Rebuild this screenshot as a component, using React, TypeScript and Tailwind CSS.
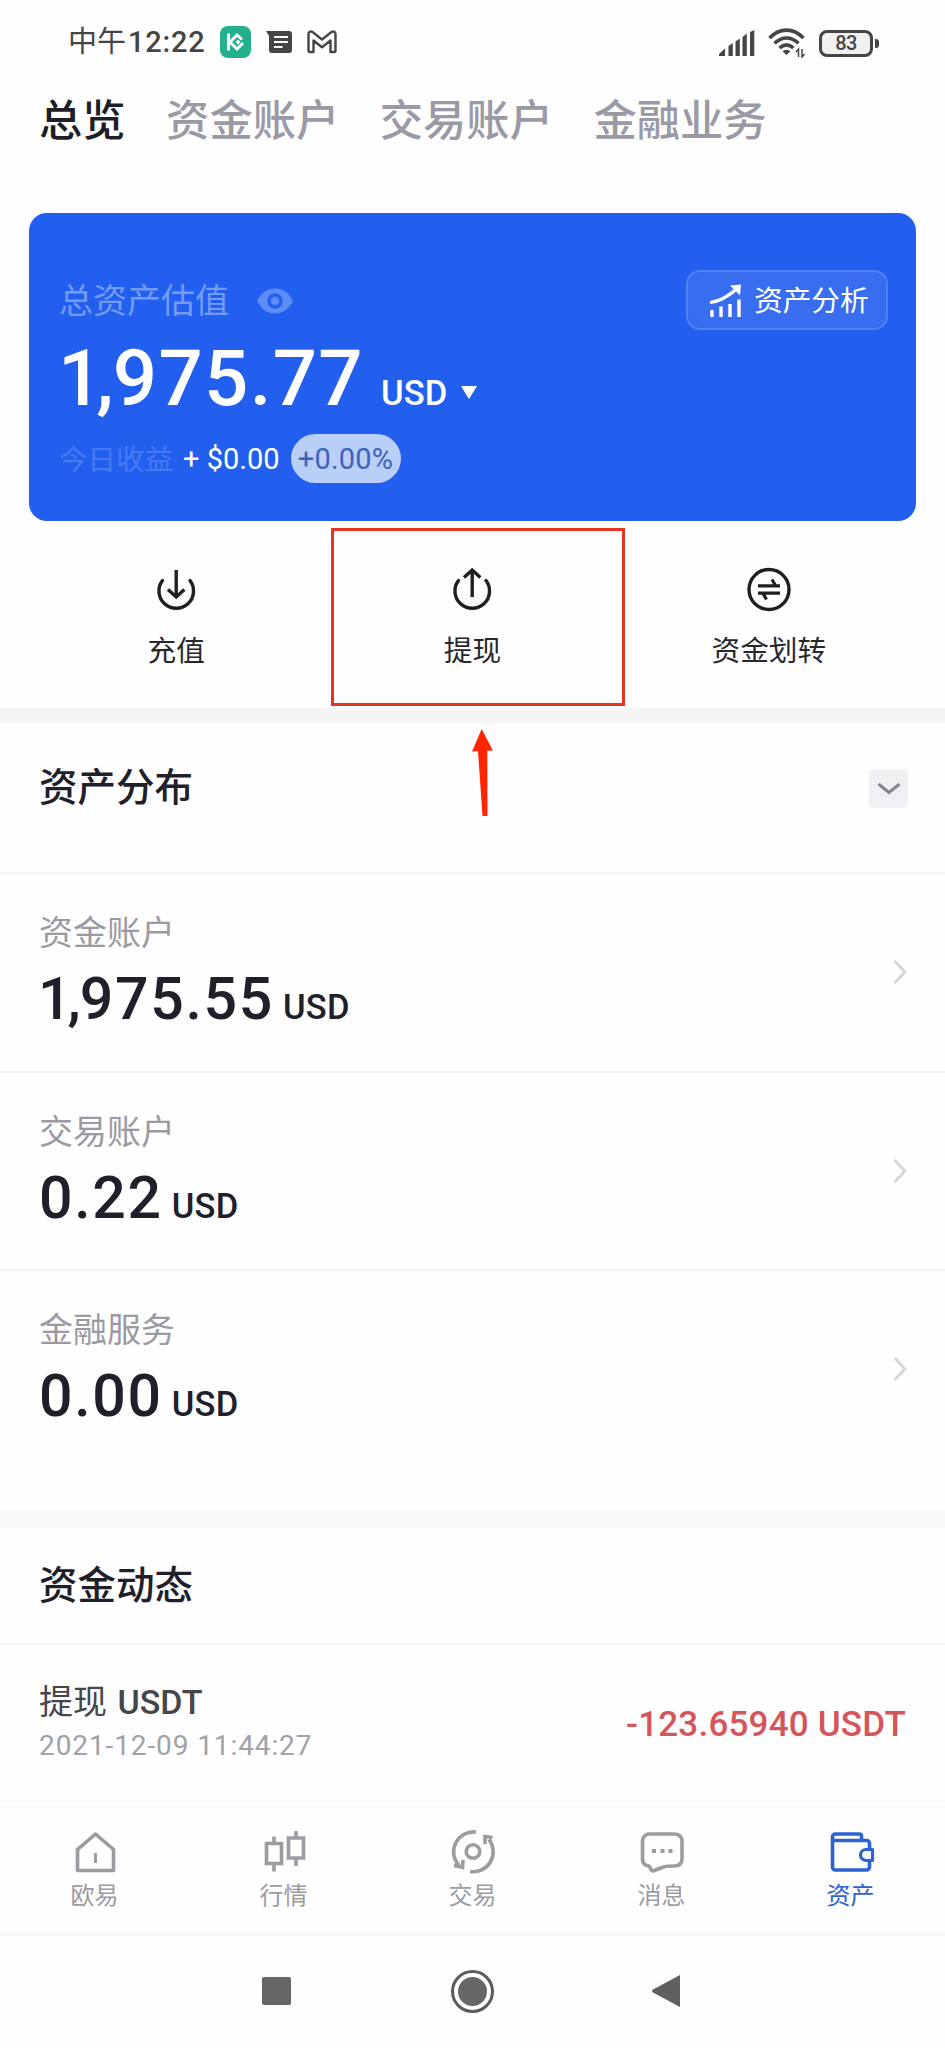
import React from "react";

const FONT = "font-['Roboto','Noto_Sans_CJK_SC',sans-serif]";

function StatusBar() {
  return (
    <header className="flex h-[86px] items-center pl-[68px] pr-[66px] pb-[2px] text-[#454545]">
      <span className="flex items-baseline leading-[40px]">
        <span className="text-[29px]">中午</span>
        <span className="ml-[2px] text-[29px] font-medium tracking-[0.8px]">12:22</span>
      </span>
      <svg className="ml-[14px] shrink-0" width="31" height="32" viewBox="0 0 31 32" fill="none">
        <rect width="31" height="32" rx="8" fill="#23b08c" />
        <path d="M8.500 7.500v17M10 16l7-7 5 4.500M10 16l7 7 6-6" stroke="#fff" strokeWidth="3" />
        <path d="m18 13.600 2.400 2.400-2.400 2.400-2.400-2.400z" fill="#fff" />
      </svg>
      <svg className="ml-[15px] shrink-0" width="26" height="22" viewBox="0 0 26 22" fill="none">
        <path d="M0 0h23a3 3 0 0 1 3 3v16a3 3 0 0 1-3 3H6a3 3 0 0 1-3-3V5z" fill="#454545" />
        <path d="M8 6h14M8 11h14M8 16h8.500" stroke="#fff" strokeWidth="2" />
      </svg>
      <svg className="ml-[15px] shrink-0" width="30" height="24" viewBox="0 0 30 24" fill="none">
        <path
          d="M1.500 20.500V4c0-2.500 2.500-3.200 4.200-1.900L15 9.500l9.300-7.400C26 .8 28.500 1.500 28.500 4v16.500c0 1-.6 1.500-1.500 1.500h-3.500V10.500L15 17.300 6.500 10.500V22H3c-.9 0-1.500-.5-1.500-1.500z"
          stroke="#454545" strokeWidth="2.400" strokeLinejoin="round"
        />
      </svg>
      <div className="ml-auto mt-[2px] flex items-center">
        <svg width="36" height="26" viewBox="0 0 36 26" fill="#454545">
          <path d="M0 26v-2l6-5.500V26zM9.500 26V16l4.300-3v13zM16.500 26V11.500l4.300-3V26zM23.500 26V7l4.300-3.500V26zM31 26V2l4.300-2v26z" />
        </svg>
        <svg className="ml-[13px]" width="38" height="30" viewBox="0 0 38 30" fill="none" stroke="#454545">
          <path d="M1.500 10C12 -.5 25 -.5 35.500 10" strokeWidth="3.600" />
          <path d="M6.500 15.200c7.500-7 16.500-7 24 0" strokeWidth="3.600" />
          <path d="M11.500 20c4.500-4 9.500-4 14 0" strokeWidth="3.600" />
          <path d="m18.500 27-4-3.800c2.500-2 5.500-2 8 0z" fill="#454545" stroke="none" />
          <path d="M30.500 29v-8l-2.500 3M34 21v8l2.500-3" strokeWidth="1.500" />
        </svg>
        <div className="ml-[13px] flex h-[27px] w-[54px] items-center justify-center rounded-[8px] border-[3px] border-[#454545] bg-[#f1f1f1] text-[20px] font-medium leading-none tracking-[-0.5px]">
          83
        </div>
        <span className="ml-[2px] h-[9px] w-[4px] rounded-r-[3px] bg-[#454545]" />
      </div>
    </header>
  );
}

function Tabs() {
  return (
    <nav className="flex h-[127px] gap-[40.500px] pl-[39px] pt-[8px] text-[43.300px] font-medium leading-[56px] text-[#9a9aa6]">
      <span className="text-[#1e1e28]">总览</span>
      <span>资金账户</span>
      <span>交易账户</span>
      <span>金融业务</span>
    </nav>
  );
}

function BalanceCard() {
  return (
    <section className="mx-[29px] flex h-[308px] flex-col rounded-[18px] bg-[#225fee] pl-[30px] pr-[28px] pt-[57px]">
      <div className="flex h-[60px] items-center">
        <span className="mt-[2px] text-[34px] leading-[60px] text-[#759cf5]">总资产估值</span>
        <svg className="ml-[28px] mt-[2px]" width="36" height="26" viewBox="0 0 36 26" fill="none">
          <path d="M0 13C4.500 4.500 10.500.5 18 .5S31.500 4.500 36 13c-4.500 8.500-10.500 12.500-18 12.500S4.500 21.500 0 13z" fill="#5c8cf6" />
          <circle cx="18" cy="13" r="6" stroke="#225fee" strokeWidth="3.400" />
        </svg>
        <div className="ml-auto flex h-[60px] w-[202px] items-center rounded-[14px] border-2 border-[#4f81f5] bg-[#386df0] pl-[21px] text-white">
          <svg width="33" height="33" viewBox="0 0 33 33" fill="none" stroke="#fff">
            <path d="M1 18.500C12 17 20 12 28 4.500" strokeWidth="3.200" />
            <path d="m21 1.500 11-1-1 11z" fill="#fff" stroke="none" />
            <path d="M3 33v-7M12 33V22.500M21 33V20M30 33V15.500" strokeWidth="3.400" />
          </svg>
          <span className="ml-[12px] mt-[2px] whitespace-nowrap text-[28.700px] leading-[56px]">资产分析</span>
        </div>
      </div>
      <div className="mt-[5px] flex h-[87px] items-baseline text-white">
        <span className="ml-[-1px] text-[78px] font-medium leading-[87px]">
          <span className="tracking-[-6px]">1</span>
          <span className="tracking-[-1px]">,</span>
          <span className="tracking-[1.300px]">975.77</span>
        </span>
        <span className="ml-[17px] text-[34.500px] font-medium tracking-[0.200px]">USD</span>
        <svg className="ml-[13px] mt-[51px] self-start" width="16" height="13" viewBox="0 0 16 13" fill="#fff">
          <path d="M0 0h16L8 13z" />
        </svg>
      </div>
      <div className="mt-[12px] flex h-[49px] items-center leading-[49px]">
        <span className="mt-[3px] text-[28.500px] text-[#4679f1]">今日收益</span>
        <span className="ml-[10px] mt-[2px] text-[29px] text-white">+ $0.00</span>
        <span className="ml-[11px] h-[49px] w-[110px] rounded-full bg-[#bacff8] text-center text-[29px] leading-[51px] tracking-[0.200px] text-[#3d62bd]">
          +0.00%
        </span>
      </div>
    </section>
  );
}

function Action({ label, children }: { label: string; children: React.ReactNode }) {
  return (
    <div className="flex flex-col items-center pt-[46px]">
      <svg width="46" height="46" viewBox="0 0 46 46" fill="none" stroke="#1f1f1f" strokeWidth="3.400">
        {children}
      </svg>
      <span className="mt-[18px] text-[28.700px] leading-[40px] text-[#28282c]">{label}</span>
    </div>
  );
}

function Actions() {
  return (
    <section className="relative mx-[28px] grid h-[187px] grid-cols-3">
      <Action label="充值">
        <path d="M9.500 13.500A17.300 17.300 0 1 0 37 13.500" strokeLinecap="round" />
        <path d="M23.200 3v26M15 22.500l8.200 7.500 8.200-7.500" />
      </Action>
      <Action label="提现">
        <path d="M9.500 13.500A17.300 17.300 0 1 0 37 13.500" strokeLinecap="round" />
        <path d="M23.200 30V3M15 10.500 23.200 3l8.200 7.500" />
      </Action>
      <Action label="资金划转">
        <circle cx="23" cy="22.500" r="20" />
        <path d="M12 18.800h22M26 12.500l3.500 6M34 26.200H12M20.500 32.500 17 26.500" strokeWidth="3.200" />
      </Action>
      <div className="absolute left-[303px] top-[7px] h-[178px] w-[294px] border-[3px] border-[#e83323]" />
      <svg className="absolute left-[443px] top-[207px]" width="24" height="90" viewBox="0 0 24 90" fill="#ff2600">
        <path d="M10.700 1 21.800 22.500l-5.500.3L16.500 88h-5L7 23.200l-6 .3z" />
      </svg>
    </section>
  );
}

function Account({ label, lead, value }: { label: string; lead?: boolean; value: string }) {
  return (
    <div className="flex h-[198.500px] items-center border-b-[2px] border-[#f4f4f4] pl-[39px] pr-[37px]">
      <div className="flex h-full flex-col pt-[35px]">
        <span className="text-[34px] leading-[48px] text-[#9a9aa2]">{label}</span>
        <span className="mt-[6px] flex items-baseline text-[#20202a]">
          <span className="text-[59px] font-medium leading-[72px]">
            {lead && (
              <>
                <span className="ml-[-1px] tracking-[-4px]">1</span>
                <span className="tracking-[-1px]">,</span>
              </>
            )}
            <span className="tracking-[1.700px]">{value}</span>
          </span>
          <span className="ml-[9px] text-[34.500px] font-medium tracking-[0.200px]">USD</span>
        </span>
      </div>
      <svg className="ml-auto" width="16" height="26" viewBox="0 0 16 26" fill="none" stroke="#d6d6da" strokeWidth="2.800">
        <path d="m2.500 2 10.500 11L2.500 24" />
      </svg>
    </div>
  );
}

function Distribution() {
  return (
    <section className="border-t-[15px] border-[#f5f5f6]">
      <div className="flex h-[151px] items-start justify-between border-b-[2px] border-[#f2f2f2] pl-[39px] pr-[37px]">
        <h2 className="mt-[39px] text-[38.500px] font-medium leading-[52px] text-[#20202a]">资产分布</h2>
        <div className="mt-[46px] flex h-[39px] w-[39px] items-center justify-center rounded-[5px] bg-[#f0f0f4]">
          <svg width="24" height="13" viewBox="0 0 24 13" fill="none" stroke="#85858f" strokeWidth="3">
            <path d="m1.500 2 10.500 8.500L22.500 2" />
          </svg>
        </div>
      </div>
      <Account label="资金账户" lead value="975.55" />
      <Account label="交易账户" value="0.22" />
      <div className="h-[238px] overflow-hidden">
        <Account label="金融服务" value="0.00" />
        <div className="relative mt-[-2px] h-[42px] bg-[#fefefe]" />
      </div>
    </section>
  );
}

function Activity() {
  return (
    <section className="border-t-[19px] border-[#fafafa]">
      <div className="flex h-[117px] items-center border-b-[2px] border-[#f4f4f4] pl-[39px]">
        <h2 className="text-[38.500px] font-medium leading-[52px] text-[#20202a]">资金动态</h2>
      </div>
      <div className="flex h-[157px] items-center justify-between border-b-2 border-[#f8f8f8] pl-[39px] pr-[39px]">
        <div className="mt-[2px] flex flex-col">
          <span className="text-[34px] leading-[44px] text-[#45454a]">
            提现 <span className="ml-[2px] font-medium">USDT</span>
          </span>
          <span className="text-[28px] leading-[44px] tracking-[0.900px] text-[#a1a1a6]">2021-12-09 11:44:27</span>
        </div>
        <span className="mt-[4px] text-[35px] font-medium leading-[44px] tracking-[0.200px] text-[#d4555b]">-123.65940 USDT</span>
      </div>
    </section>
  );
}

function NavItem({ label, active, children }: { label: string; active?: boolean; children: React.ReactNode }) {
  return (
    <div className={active ? "flex flex-col items-center pt-[21px] text-[#2d62d3]" : "flex flex-col items-center pt-[21px] text-[#9b9ba1]"}>
      <svg width="48" height="46" viewBox="0 0 48 46" fill="none" stroke="currentColor" strokeWidth="3.600">
        {children}
      </svg>
      <span className="mt-[5px] text-[24px] leading-[32px]">{label}</span>
    </div>
  );
}

function BottomNav() {
  return (
    <nav className="mt-[4px] grid h-[130px] grid-cols-5 border-b-[3px] border-t-2 border-[#f6f6f6]">
      <NavItem label="欧易">
        <path d="M6.500 41.500V20.500L24.500 5 42.500 20.500v21z" strokeLinejoin="round" />
        <path d="M24.500 24v10" strokeWidth="3" />
      </NavItem>
      <NavItem label="行情">
        <path d="M6.500 14.500h15v20h-15zM14 7.500v7M14 34.500v8M28.500 9h15v20h-15zM36 2v7M36 29v8" />
      </NavItem>
      <NavItem label="交易">
        <circle cx="24" cy="22.500" r="6.800" />
        <path d="M27 3A20 20 0 0 0 10 36.500M5 36.500l8.500 1.800.5-7.500M21 42.500A20 20 0 0 0 40 10.500M43.500 8.500 36 7.500v7.500" />
      </NavItem>
      <NavItem label="消息">
        <path d="M11 5h26a7 7 0 0 1 7 7v18c0 5-3 7-8 7-6 0-9 0-12 1.500L15 42c-2-.5-2.500-3-4-5-4.500-.5-6.500-3-6.500-7V12A7 7 0 0 1 11 5z" strokeLinejoin="round" />
        <path d="M14 22h4M22.500 22h4M30.500 22h4" strokeWidth="4" />
      </NavItem>
      <NavItem label="资产" active>
        <path d="M42.500 19.500v-5a3 3 0 0 0-3-3h-34M34.500 11.500V7a2 2 0 0 0-2-2h-24a3 3 0 0 0-3 3v30a3 3 0 0 0 3 3h31a3 3 0 0 0 3-3v-6" />
        <path d="M45.500 20.500H39a5.500 5.500 0 0 0 0 11h6.500z" strokeLinejoin="round" strokeWidth="3.200" />
      </NavItem>
    </nav>
  );
}

function SystemNav() {
  return (
    <footer className="flex h-[112px] items-center pb-[2px] pl-[262px]">
      <span className="h-[28px] w-[29px] rounded-[2px] bg-[#666]" />
      <span className="ml-[160px] flex h-[43px] w-[43px] items-center justify-center rounded-full border-[3px] border-[#5c5c5c]">
        <span className="h-[29px] w-[29px] rounded-full bg-[#666]" />
      </span>
      <svg className="ml-[158px]" width="28" height="32" viewBox="0 0 28 32" fill="#5f5f5f">
        <path d="M28 0v32L1 17.500q-2-1.500 0-3z" />
      </svg>
    </footer>
  );
}

export default function App() {
  return (
    <main className={`${FONT} flex h-[2048px] w-[945px] flex-col overflow-hidden bg-[#fefefe]`}>
      <StatusBar />
      <Tabs />
      <BalanceCard />
      <Actions />
      <Distribution />
      <Activity />
      <BottomNav />
      <SystemNav />
    </main>
  );
}
